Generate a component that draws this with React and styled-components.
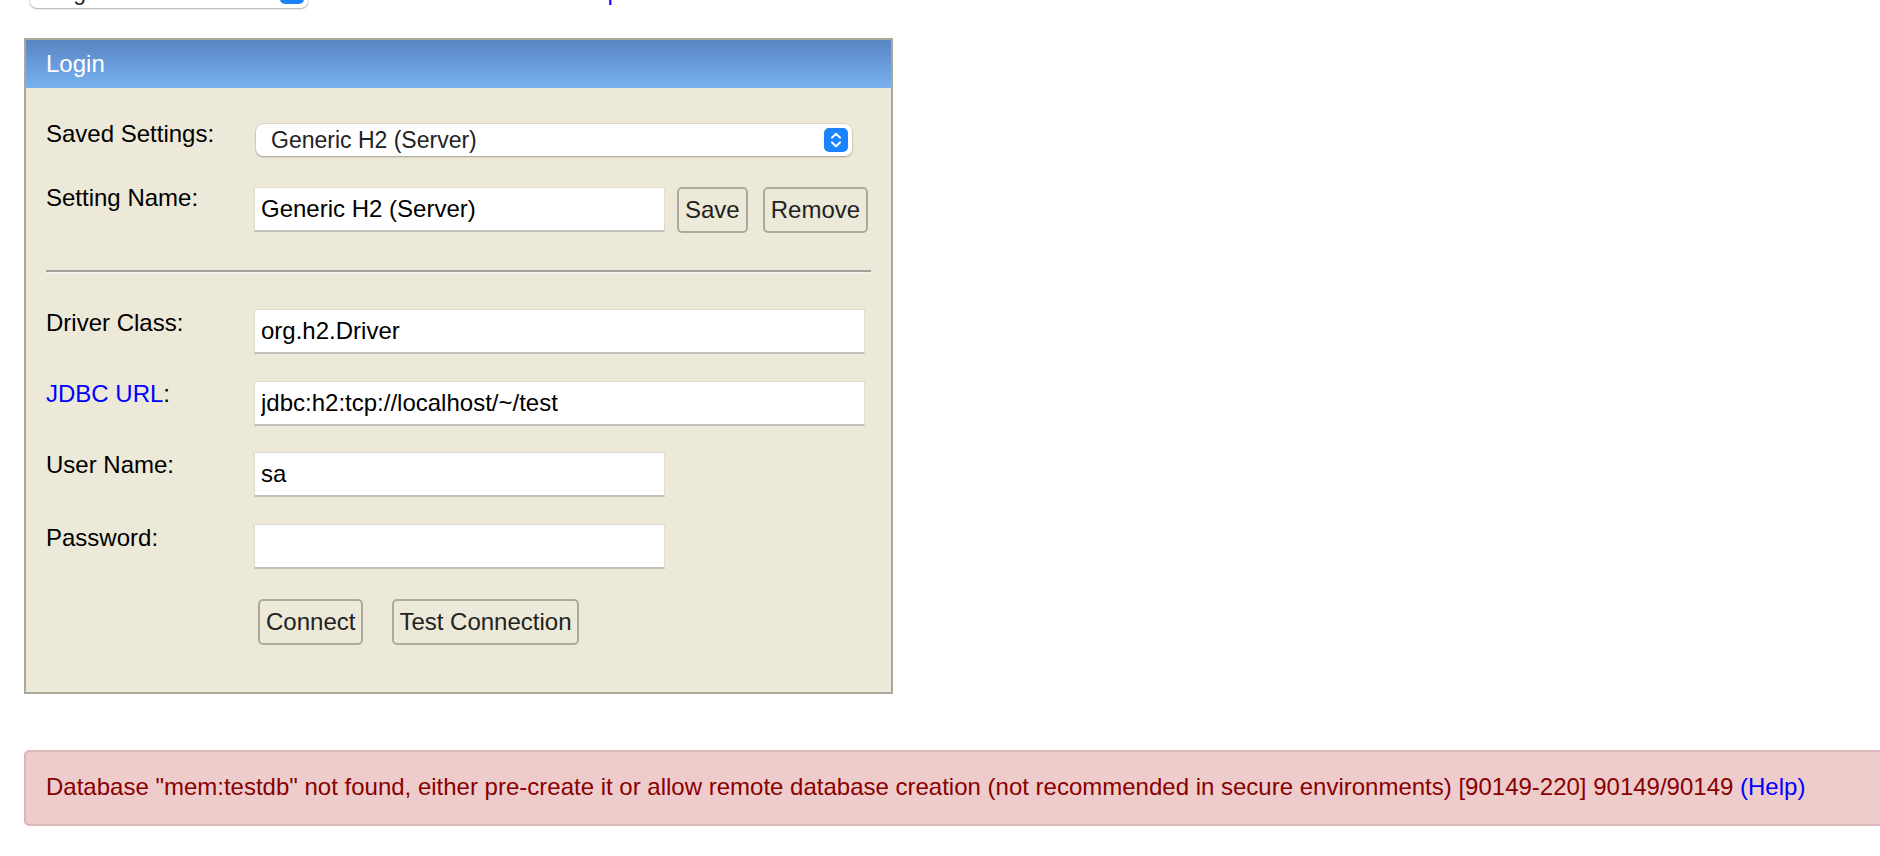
import React from 'react';
import styled, { createGlobalStyle } from 'styled-components';

const GlobalStyle = createGlobalStyle`
  html, body { margin: 0; padding: 0; background: #ffffff; }
  body {
    font-family: "Liberation Sans", Arial, Helvetica, sans-serif;
    font-size: 24px;
    line-height: 28px;
    color: #000;
    overflow: hidden;
  }
  #root { width: 1880px; height: 856px; overflow: hidden; }
`;

const Page = styled.div`
  padding-left: 24px;
  height: 856px;
  overflow: hidden;
`;

const TopBar = styled.div`
  display: flex;
  align-items: center;
  height: 32px;
  margin-top: -24px;
  padding-left: 6px;
`;

const Links = styled.div`
  display: flex;
  gap: 20px;
  margin-left: 38px;
  line-height: 28px;
`;

const Link = styled.a`
  color: #0000ff;
  text-decoration: none;
  cursor: pointer;
`;

const SelectBox = styled.div`
  box-sizing: border-box;
  display: flex;
  align-items: center;
  justify-content: space-between;
  width: ${p => p.$width}px;
  height: 32px;
  margin-left: ${p => p.$ml || 0}px;
  padding: 0 4px 0 15px;
  background: #ffffff;
  border-radius: 7px;
  box-shadow: 0 0 0 0.5px rgba(0, 0, 0, 0.12), 0 1px 2px rgba(0, 0, 0, 0.28);
  font-size: 23px;
  color: #222;
`;

const Panel = styled.div`
  box-sizing: border-box;
  width: 869px;
  margin-top: 30px;
  border: 2px solid #aca899;
  background: #ece9d8;
`;

const PanelHeader = styled.div`
  padding: 10px 20px;
  color: #ffffff;
  background: linear-gradient(#5884c3, #78b2f0);
`;

const PanelBody = styled.div`
  padding: 0 20px 47px;
`;

const Row = styled.div`
  display: grid;
  grid-template-columns: 167px 1fr;
  column-gap: 41px;
  align-items: start;
  margin-top: ${p => p.$mt}px;
`;

const Label = styled.div`
  white-space: nowrap;
  line-height: 28px;
`;

const Controls = styled.div`
  display: flex;
  align-items: flex-start;
  padding-top: ${p => p.$offset || 0}px;
`;

const TextInput = styled.input`
  box-sizing: border-box;
  width: ${p => p.$width}px;
  height: 45px;
  margin: 0;
  padding: 0 6px;
  border: 1px solid #dedcd4;
  border-bottom: 2px solid #c2c0b8;
  background: #ffffff;
  font-family: "Liberation Sans", Arial, Helvetica, sans-serif;
  font-size: 24px;
  color: #000;
  outline: none;
`;

const Button = styled.button`
  box-sizing: border-box;
  height: 46px;
  margin: 0 0 0 ${p => p.$ml || 0}px;
  padding: 0 ${p => (p.$px !== undefined ? p.$px : 6)}px;
  border: 2px solid #adaa9c;
  border-radius: 5px;
  background: transparent;
  font-family: "Liberation Sans", Arial, Helvetica, sans-serif;
  font-size: 24px;
  color: #222;
  cursor: pointer;
`;

const Divider = styled.div`
  margin-top: 37px;
  height: 2px;
  background: #a2a09a;
  border-bottom: 2px solid #f3f1ea;
`;

const ErrorBox = styled.p`
  margin: 56px -40px 0 0;
  padding: 21px 20px 23px;
  border: 2px solid #dcb5b5;
  border-radius: 5px;
  background: #eecccc;
  color: #880000;
  white-space: nowrap;
`;

function SelectArrow() {
  return (
    <svg width="24" height="24" viewBox="0 0 24 24">
      <rect x="0" y="0" width="24" height="24" rx="5" fill="#1b83fb" />
      <path d="M8 9.6 L12 5.8 L16 9.6" stroke="#fff" strokeWidth="2" fill="none" strokeLinecap="round" strokeLinejoin="round" />
      <path d="M8 14.4 L12 18.2 L16 14.4" stroke="#fff" strokeWidth="2" fill="none" strokeLinecap="round" strokeLinejoin="round" />
    </svg>
  );
}

export default function App() {
  return (
    <>
      <GlobalStyle />
      <Page>
        <TopBar>
          <SelectBox $width={278}>
            <span>English</span>
            <SelectArrow />
          </SelectBox>
          <Links>
            <Link>Preferences</Link>
            <Link>Tools</Link>
            <Link>Help</Link>
          </Links>
        </TopBar>

        <Panel>
          <PanelHeader>Login</PanelHeader>
          <PanelBody>
            <Row $mt={32}>
              <Label>Saved Settings:</Label>
              <Controls $offset={4}>
                <SelectBox $width={596} $ml={2}>
                  <span>Generic H2 (Server)</span>
                  <SelectArrow />
                </SelectBox>
              </Controls>
            </Row>
            <Row $mt={28}>
              <Label>Setting Name:</Label>
              <Controls $offset={3}>
                <TextInput $width={411} defaultValue="Generic H2 (Server)" />
                <Button $ml={12}>Save</Button>
                <Button $ml={15}>Remove</Button>
              </Controls>
            </Row>
            <Divider />
            <Row $mt={35}>
              <Label>Driver Class:</Label>
              <Controls>
                <TextInput $width={611} defaultValue="org.h2.Driver" />
              </Controls>
            </Row>
            <Row $mt={26}>
              <Label>
                <Link>JDBC URL</Link>:
              </Label>
              <Controls $offset={1}>
                <TextInput $width={611} defaultValue="jdbc:h2:tcp://localhost/~/test" />
              </Controls>
            </Row>
            <Row $mt={25}>
              <Label>User Name:</Label>
              <Controls $offset={1}>
                <TextInput $width={411} defaultValue="sa" />
              </Controls>
            </Row>
            <Row $mt={27}>
              <Label>Password:</Label>
              <Controls>
                <TextInput $width={411} type="password" defaultValue="" />
              </Controls>
            </Row>
            <Row $mt={30}>
              <Label />
              <Controls>
                <Button $ml={4}>Connect</Button>
                <Button $ml={29} $px={5}>Test Connection</Button>
              </Controls>
            </Row>
          </PanelBody>
        </Panel>

        <ErrorBox>
          Database "mem:testdb" not found, either pre-create it or allow remote database creation (not recommended in secure environments) [90149-220] 90149/90149{' '}
          <Link>(Help)</Link>
        </ErrorBox>
      </Page>
    </>
  );
}
